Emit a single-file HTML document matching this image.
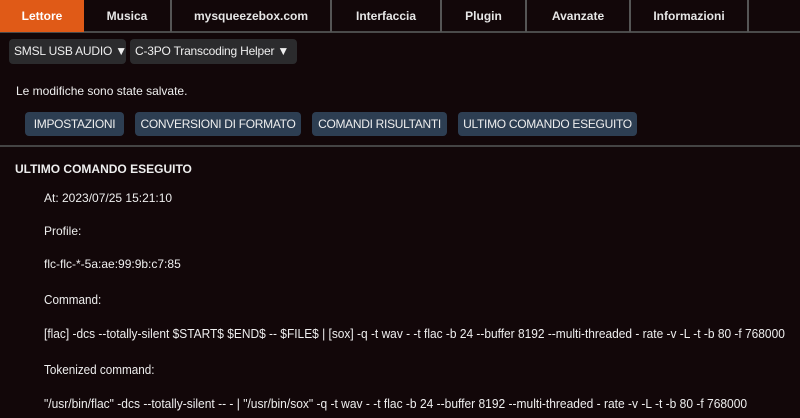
<!DOCTYPE html>
<html><head><meta charset="utf-8"><style>
*{margin:0;padding:0;box-sizing:border-box}
body{width:800px;height:418px;overflow:hidden;background:#120709;color:#eee;font-family:"Liberation Sans","DejaVu Sans",sans-serif;position:relative}
.tabs{position:absolute;left:0;top:0;width:800px;height:33px;border-bottom:2px solid #4a4a4a}
.tab{position:absolute;top:0;height:32px;line-height:32px;text-align:center;font-weight:bold;font-size:12px;color:#e6e6e6;border-right:2px solid #555}
.tab.on{background:#e05a17;color:#fff;border-right:none}
.sel{position:absolute;top:39px;height:25px;line-height:25px;background:#2b2b2d;border-radius:4px;font-size:12px;padding-left:5px;color:#eee;white-space:nowrap;overflow:hidden;letter-spacing:-0.2px}
.msg{position:absolute;left:16px;top:84px;font-size:12px}
.btn{position:absolute;top:112px;height:24px;line-height:24px;background:#2d3e52;border-radius:4px;font-size:12px;text-align:center;color:#eee;white-space:nowrap;letter-spacing:-0.3px}
.hr{position:absolute;left:0;top:145px;width:800px;height:2px;background:#444}
.t{position:absolute;font-size:12px;white-space:nowrap;transform-origin:0 0}
.n{font-size:13px}
</style></head><body>
<div class="tabs">
<div class="tab on" style="left:0;width:84px">Lettore</div>
<div class="tab" style="left:84px;width:88px">Musica</div>
<div class="tab" style="left:172px;width:160px">mysqueezebox.com</div>
<div class="tab" style="left:332px;width:110px">Interfaccia</div>
<div class="tab" style="left:442px;width:85px">Plugin</div>
<div class="tab" style="left:527px;width:104px">Avanzate</div>
<div class="tab" style="left:631px;width:118px;">Informazioni</div>
</div>
<div class="sel" style="left:9px;width:117px">SMSL USB AUDIO ▼</div>
<div class="sel" style="left:130px;width:167px">C-3PO Transcoding Helper ▼</div>
<div class="msg">Le modifiche sono state salvate.</div>
<div class="btn" style="left:25px;width:99px">IMPOSTAZIONI</div>
<div class="btn" style="left:135px;width:166px">CONVERSIONI DI FORMATO</div>
<div class="btn" style="left:312px;width:135px">COMANDI RISULTANTI</div>
<div class="btn" style="left:458px;width:179px">ULTIMO COMANDO ESEGUITO</div>
<div class="hr"></div>
<div class="t" style="left:15px;top:162px;font-weight:bold">ULTIMO COMANDO ESEGUITO</div>
<div class="t" style="left:44px;top:191px">At: 2023/07/25 15:21:10</div>
<div class="t" style="left:44px;top:224px">Profile:</div>
<div class="t" style="left:44px;top:257px">flc-flc-*-5a:ae:99:9b:c7:85</div>
<div class="t n" style="left:44px;top:292px;transform:scaleX(0.9)">Command:</div>
<div class="t n" style="left:44px;top:326px;transform:scaleX(0.918)">[flac] -dcs --totally-silent $START$ $END$ -- $FILE$ | [sox] -q -t wav - -t flac -b 24 --buffer 8192 --multi-threaded - rate -v -L -t -b 80 -f 768000</div>
<div class="t n" style="left:44px;top:362px;transform:scaleX(0.9)">Tokenized command:</div>
<div class="t n" style="left:44px;top:396px;transform:scaleX(0.924)">"/usr/bin/flac" -dcs --totally-silent -- - | "/usr/bin/sox" -q -t wav - -t flac -b 24 --buffer 8192 --multi-threaded - rate -v -L -t -b 80 -f 768000</div>
</body></html>
